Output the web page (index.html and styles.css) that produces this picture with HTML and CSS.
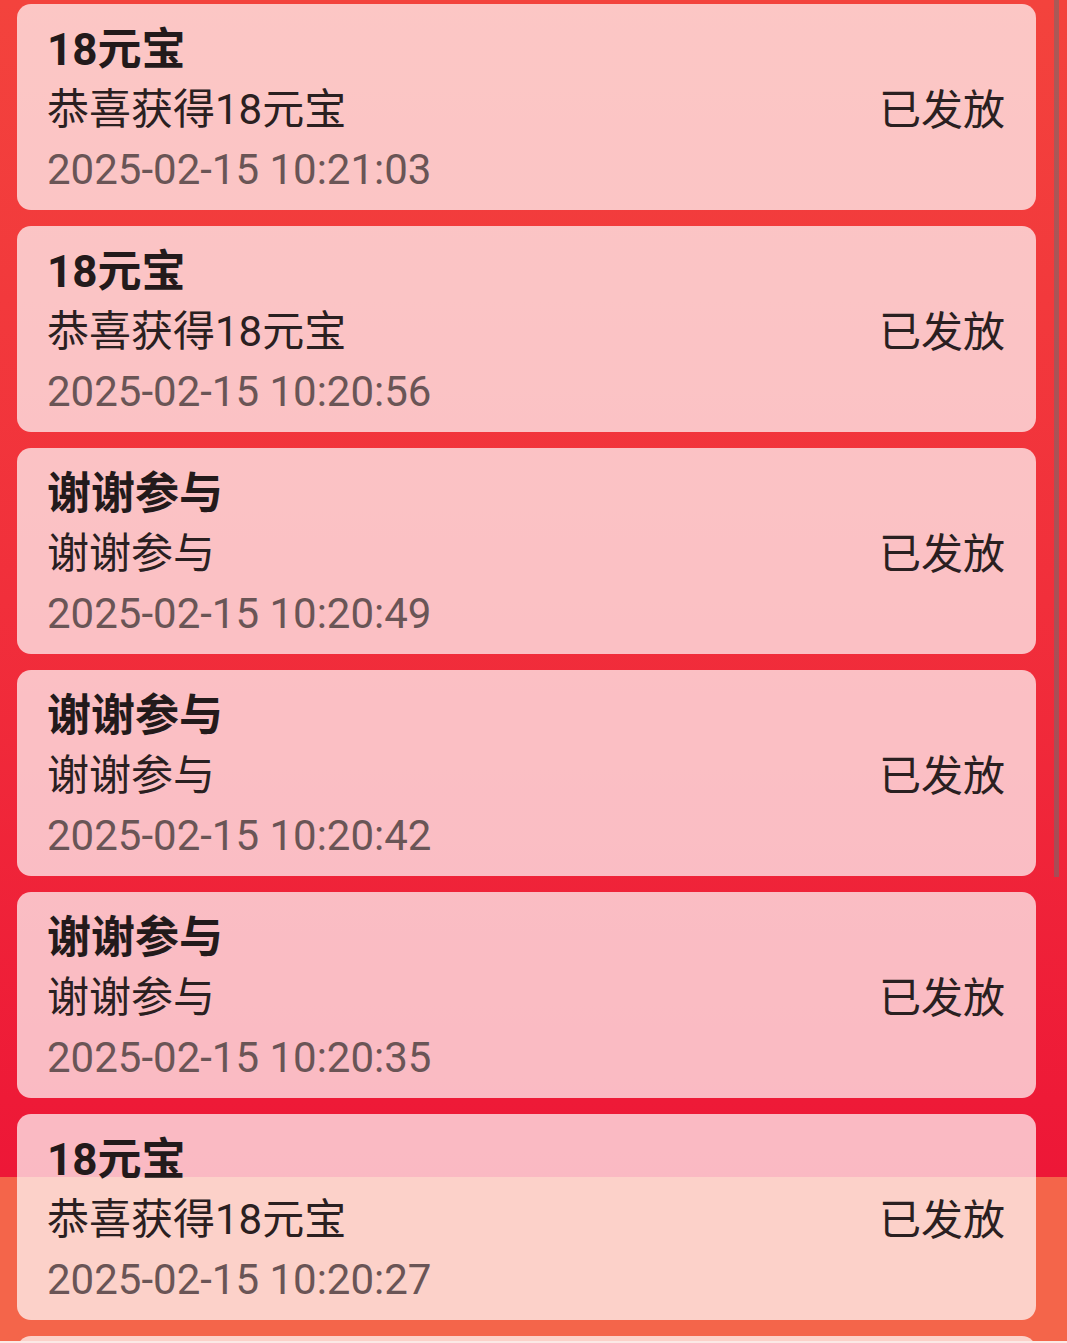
FILE: index.html
```html
<!DOCTYPE html>
<html lang="zh-CN">
<head>
<meta charset="utf-8">
<title>中奖记录</title>
<link rel="stylesheet" href="styles.css">
</head>
<body>
<div class="screen">
  <div class="list">
    <div class="card">
      <div class="info">
        <div class="title">18元宝</div>
        <div class="desc">恭喜获得18元宝</div>
        <div class="time">2025-02-15 10:21:03</div>
      </div>
      <div class="status">已发放</div>
    </div>
    <div class="card">
      <div class="info">
        <div class="title">18元宝</div>
        <div class="desc">恭喜获得18元宝</div>
        <div class="time">2025-02-15 10:20:56</div>
      </div>
      <div class="status">已发放</div>
    </div>
    <div class="card">
      <div class="info">
        <div class="title">谢谢参与</div>
        <div class="desc">谢谢参与</div>
        <div class="time">2025-02-15 10:20:49</div>
      </div>
      <div class="status">已发放</div>
    </div>
    <div class="card">
      <div class="info">
        <div class="title">谢谢参与</div>
        <div class="desc">谢谢参与</div>
        <div class="time">2025-02-15 10:20:42</div>
      </div>
      <div class="status">已发放</div>
    </div>
    <div class="card">
      <div class="info">
        <div class="title">谢谢参与</div>
        <div class="desc">谢谢参与</div>
        <div class="time">2025-02-15 10:20:35</div>
      </div>
      <div class="status">已发放</div>
    </div>
    <div class="card">
      <div class="info">
        <div class="title">18元宝</div>
        <div class="desc">恭喜获得18元宝</div>
        <div class="time">2025-02-15 10:20:27</div>
      </div>
      <div class="status">已发放</div>
    </div>
    <div class="card card-next"></div>
  </div>
  <div class="scrollbar"></div>
  <div class="bottom-edge"></div>
</div>
</body>
</html>
```

FILE: styles.css
```css
html, body {
  margin: 0;
  padding: 0;
}

body {
  font-family: Roboto, "Noto Sans CJK SC", "Noto Sans", sans-serif;
  overflow: hidden;
}

.screen {
  position: relative;
  width: 1067px;
  height: 1343px;
  overflow: hidden;
  background: linear-gradient(to bottom,
    #f3433d 0px,
    #f12f3b 600px,
    #ee1a37 1100px,
    #ed1737 1177px,
    #f4654a 1177px,
    #f4654a 1343px);
}

.list {
  display: flex;
  flex-direction: column;
  gap: 16px;
  padding: 4px 31px 0 17px;
}

.card {
  display: flex;
  align-items: center;
  justify-content: space-between;
  height: 206px;
  box-sizing: border-box;
  padding: 16px 31px 10px 30px;
  border-radius: 14px;
  background: rgba(255, 255, 255, 0.7);
  flex-shrink: 0;
}

.info {
  display: flex;
  flex-direction: column;
}

.title {
  font-size: 44px;
  line-height: 60px;
  font-weight: 700;
  color: #231a1b;
}

.desc {
  font-size: 42px;
  line-height: 60px;
  color: #2a2021;
}

.time {
  font-size: 42px;
  line-height: 60px;
  color: #6a5556;
}

.status {
  font-size: 42px;
  line-height: 60px;
  color: #2a2021;
  margin-top: 2px;
}

.scrollbar {
  position: absolute;
  top: 0;
  right: 8px;
  width: 5px;
  height: 877px;
  background: rgba(110, 110, 110, 0.55);
}

.bottom-edge {
  position: absolute;
  left: 0;
  right: 0;
  bottom: 0;
  height: 2px;
  background: #fbeae6;
}
```
